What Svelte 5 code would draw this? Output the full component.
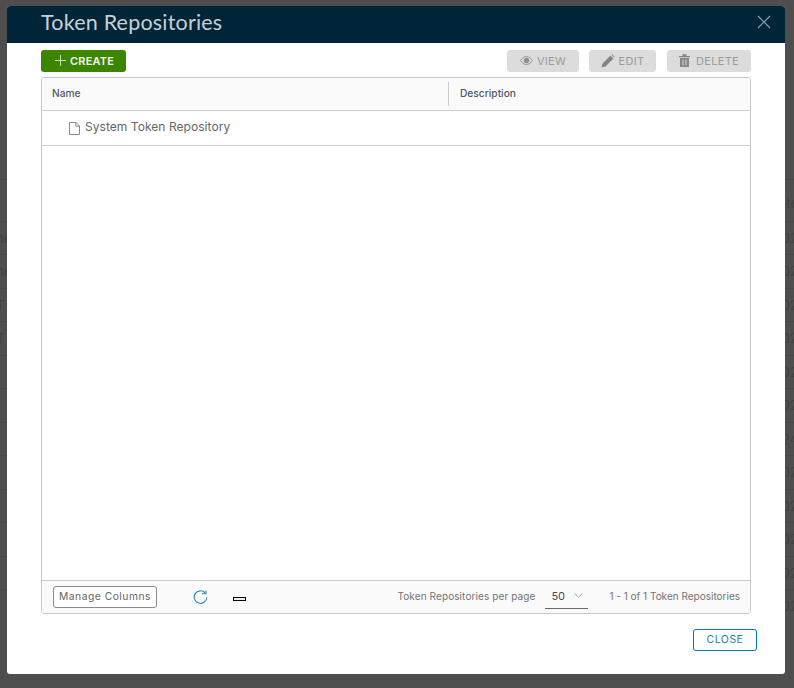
<script lang="ts">
  // faint table rows of the page behind the dialog
  const behind = [
    { left: "", right: "ate" },
    { left: "ne", right: "02" },
    { left: "ne", right: "02" },
    { left: "T", right: "02" },
    { left: "T", right: "02" },
    { left: "", right: "02" },
    { left: "", right: "02" },
    { left: "", right: "24" },
    { left: "", right: "02" },
    { left: "", right: "02" },
    { left: "", right: "02" },
    { left: "", right: "02" },
    { left: "", right: "02" },
  ];
</script>

<div class="page">
  <div class="rows" aria-hidden="true">
    {#each behind as row}
      <div class="row"><span>{row.left}</span><span>{row.right}</span></div>
    {/each}
  </div>

  <div class="modal">
    <header class="title-bar">
      <h1>Token Repositories</h1>
      <svg class="x" width="14" height="14" viewBox="0 0 14 14">
        <path d="M1 1l12 12M13 1L1 13" stroke="#8fa2ad" stroke-width="1.1" fill="none" />
      </svg>
    </header>

    <div class="body">
      <div class="toolbar">
        <button class="btn create">
          <svg width="11" height="11" viewBox="0 0 11 11">
            <path d="M5.500 0v11M0 5.500h11" stroke="#c9dfb8" stroke-width="1" />
          </svg>
          CREATE
        </button>
        <div class="spacer"></div>
        <button class="btn off view">
          <svg width="13" height="9" viewBox="0 0 14 10">
            <path d="M0.500 5C2.300 2 4.500 0.600 7 0.600S11.700 2 13.500 5C11.700 8 9.500 9.400 7 9.400S2.300 8 0.500 5Z" fill="none" stroke="#8f8f8f" />
            <circle cx="7" cy="5" r="3" fill="#8f8f8f" />
          </svg>
          VIEW
        </button>
        <button class="btn off edit">
          <svg width="14" height="14" viewBox="0 0 14 14">
            <path d="M0.500 13.500L1.500 9.500L9.500 1.500L12.500 4.500L4.500 12.500ZM10.500 0.700L11.200 0.300L13.700 2.800L13.300 3.500Z" fill="#858585" />
          </svg>
          EDIT
        </button>
        <button class="btn off delete">
          <svg width="11" height="13" viewBox="0 0 11 13">
            <path d="M0 2h11v1.200H0zM3.500 0.300h4V2h-4zM1 4h9v9H1z" fill="#858585" />
            <path d="M4 5.500v6M7 5.500v6" stroke="#dcdcdc" />
          </svg>
          DELETE
        </button>
      </div>

      <div class="grid">
        <div class="grid-head">
          <div class="col name">Name</div>
          <div class="col desc">Description</div>
        </div>
        <div class="grid-row">
          <svg width="11" height="13" viewBox="0 0 11 13">
            <path d="M0.500 0.500H7L10.500 4V12.500H0.500ZM6.800 0.500V4.200H10.500" fill="none" stroke="#8a8a8a" />
          </svg>
          <span>System Token Repository</span>
        </div>
        <div class="grid-empty"></div>
        <div class="grid-foot">
          <button class="manage">Manage Columns</button>
          <svg class="refresh" width="15" height="15" viewBox="0 0 15 15">
            <path d="M12.200 2.900A6.300 6.300 0 1 0 13.800 7.500" fill="none" stroke="#1f8cc0" stroke-width="1.100" />
            <path d="M8.800 3.800H13V0.500" fill="none" stroke="#1f8cc0" stroke-width="1.100" />
          </svg>
          <span class="dash"></span>
          <div class="spacer"></div>
          <span class="per-page">Token Repositories per page</span>
          <div class="select">
            <span>50</span>
            <svg width="9" height="5" viewBox="0 0 9 5">
              <path d="M0.500 0.500L4.500 4.300L8.500 0.500" fill="none" stroke="#a8a8a8" />
            </svg>
          </div>
          <span class="count">1 - 1 of 1 Token Repositories</span>
        </div>
      </div>

      <div class="actions">
        <button class="close">CLOSE</button>
      </div>
    </div>
  </div>
</div>

<style>
  :global(body) {
    margin: 0;
    background: #4e4e4e;
  }
  .page {
    position: relative;
    width: 794px;
    height: 688px;
    overflow: hidden;
    background: #4e4e4e;
    font-family: Inter, "Noto Sans", sans-serif;
  }
  .rows {
    padding-top: 179px;
  }
  .row {
    display: flex;
    justify-content: space-between;
    height: 33.500px;
    box-sizing: border-box;
    border-top: 1px solid #474747;
    margin: 0 -4px;
    align-items: center;
    font-size: 13px;
    color: #424242;
  }
  .row:first-child {
    height: 41.500px;
    padding-top: 6px;
  }
  .modal {
    position: absolute;
    left: 7px;
    top: 6px;
    width: 778px;
    height: 668px;
    background: #fff;
    border-radius: 3px;
    display: flex;
    flex-direction: column;
    overflow: hidden;
  }
  .title-bar {
    height: 37px;
    box-sizing: border-box;
    flex: none;
    background: #002538;
    display: flex;
    align-items: center;
    justify-content: space-between;
    padding: 0 14px 6px 34px;
  }
  h1 {
    margin: 0;
    font-family: Lato, sans-serif;
    font-size: 21.500px;
    font-weight: 400;
    letter-spacing: 0.2px;
    color: #c6d1d7;
  }
  .body {
    flex: 1;
    display: flex;
    flex-direction: column;
    padding: 7px 28px 23px 34px;
    min-height: 0;
  }
  .toolbar {
    display: flex;
    height: 22px;
    flex: none;
    margin: 0 6px 5px 0;
  }
  .spacer {
    flex: 1;
  }
  .btn {
    height: 22px;
    border: 0;
    border-radius: 3px;
    display: flex;
    align-items: center;
    padding: 0 0 1px;
    font-family: inherit;
    font-size: 11px;
    font-weight: 400;
    letter-spacing: 0.3px;
  }
  .create {
    width: 85px;
    padding-left: 14px;
    gap: 4px;
    background: #3c8500;
    color: #f2f7ee;
    font-weight: 600;
    letter-spacing: 0.2px;
  }
  .off {
    background: #dcdcdc;
    color: #9a9a9a;
    justify-content: center;
    gap: 4px;
    margin-left: 10px;
  }
  .view {
    width: 72px;
  }
  .edit {
    width: 67px;
  }
  .delete {
    width: 84px;
    margin-left: 11px;
    gap: 6px;
  }
  .grid {
    flex: 1;
    min-height: 0;
    margin-right: 6px;
    border: 1px solid #c8c8c8;
    border-radius: 3px;
    display: flex;
    flex-direction: column;
    font-size: 11px;
  }
  .grid-head {
    height: 32px;
    flex: none;
    display: flex;
    align-items: center;
    background: #fafafa;
    border-bottom: 1px solid #cccccc;
    color: #4a5a68;
    font-weight: 500;
    font-size: 10.200px;
  }
  .col {
    height: 24px;
    display: flex;
    align-items: center;
    padding-bottom: 2px;
    box-sizing: border-box;
  }
  .name {
    width: 407px;
    padding-left: 10px;
    border-right: 1px solid #cccccc;
  }
  .desc {
    padding-left: 11px;
  }
  .grid-row {
    height: 34px;
    flex: none;
    display: flex;
    align-items: center;
    gap: 5px;
    padding-left: 27px;
    border-bottom: 1px solid #cccccc;
    color: #666666;
    font-size: 12px;
    letter-spacing: 0.05px;
  }
  .grid-row svg {
    margin-top: 1px;
  }
  .grid-row span {
    margin-bottom: 3px;
  }
  .grid-empty {
    flex: 1;
  }
  .grid-foot {
    height: 33px;
    box-sizing: border-box;
    flex: none;
    display: flex;
    align-items: center;
    background: #fafafa;
    border-top: 1px solid #cccccc;
    color: #737373;
    font-size: 10px;
    padding: 0 10px 0 11px;
  }
  .manage {
    width: 104px;
    height: 22px;
    box-sizing: border-box;
    padding: 0 0 2px;
    background: #fff;
    border: 1px solid #8c8c8c;
    border-radius: 3px;
    color: #666666;
    font-family: inherit;
    font-size: 10.300px;
    letter-spacing: 0.5px;
  }
  .refresh {
    margin-left: 36px;
  }
  .dash {
    width: 11px;
    height: 2px;
    margin: 4px 0 0 25px;
    border: 1px solid #000;
    background: #eeeeee;
  }
  .per-page {
    letter-spacing: 0.1px;
    margin-bottom: 2px;
  }
  .count {
    margin-bottom: 2px;
  }
  .select {
    width: 43px;
    height: 24px;
    box-sizing: border-box;
    margin: 0 21px 0 10px;
    padding: 0 2px 2px 6px;
    display: flex;
    align-items: center;
    justify-content: space-between;
    border-bottom: 1px solid #5d6b78;
    color: #4d4d4d;
    font-size: 11px;
  }
  .select svg {
    margin-right: 3px;
  }
  .actions {
    flex: none;
    display: flex;
    justify-content: flex-end;
    padding-top: 15px;
  }
  .close {
    width: 64px;
    height: 22px;
    padding: 0 0 2px;
    background: #fff;
    border: 1px solid #0079b8;
    border-radius: 3px;
    color: #1f80ad;
    font-family: inherit;
    font-size: 10.500px;
    letter-spacing: 0.5px;
  }
</style>
